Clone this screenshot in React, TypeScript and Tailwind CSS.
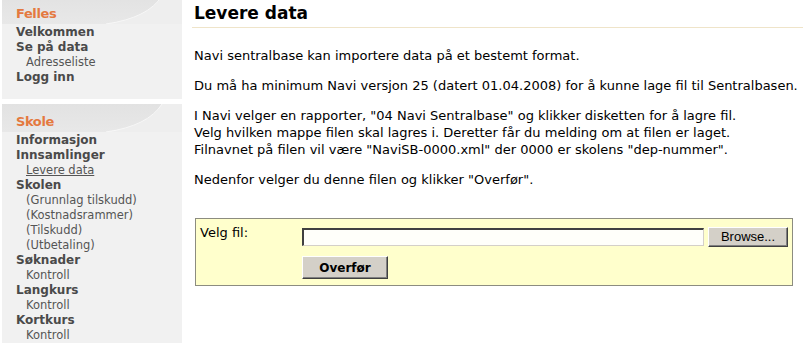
import React from "react";

type MenuItem = { label: string; sub?: boolean; active?: boolean };

const felles: MenuItem[] = [
  { label: "Velkommen" },
  { label: "Se på data" },
  { label: "Adresseliste", sub: true },
  { label: "Logg inn" },
];

const skole: MenuItem[] = [
  { label: "Informasjon" },
  { label: "Innsamlinger" },
  { label: "Levere data", sub: true, active: true },
  { label: "Skolen" },
  { label: "(Grunnlag tilskudd)", sub: true },
  { label: "(Kostnadsrammer)", sub: true },
  { label: "(Tilskudd)", sub: true },
  { label: "(Utbetaling)", sub: true },
  { label: "Søknader" },
  { label: "Kontroll", sub: true },
  { label: "Langkurs" },
  { label: "Kontroll", sub: true },
  { label: "Kortkurs" },
  { label: "Kontroll", sub: true },
];

const Swoosh = () => (
  <svg className="absolute inset-0" width="180" height="28" viewBox="0 0 180 28">
    <path d="M104 28 Q146 22 160 0 L180 0 L180 28 Z" fill="#eeeeee" />
    <path d="M104 28 Q146 22 160 0" fill="none" stroke="#f7f7f7" strokeWidth="1" />
  </svg>
);

const Panel = ({ title, items, last }: { title: string; items: MenuItem[]; last?: boolean }) => (
  <div className={`w-[180px] bg-[#f1f1f1] ${last ? "" : "pb-[14px]"}`}>
    <div className="relative h-[28px] bg-[linear-gradient(#e2e2e2,#e8e8e8)]">
      <Swoosh />
      <div className="relative pl-[14px] pt-[10px] text-[13px] leading-[16px] font-bold tracking-[-0.4px] text-[#e4793f]">
        {title}
      </div>
    </div>
    <ul className="pt-[1px] text-[#4a4a4a]">
      {items.map((it, i) => (
        <li
          key={i}
          className={
            it.sub
              ? `pl-[24px] text-[11.5px] leading-[15px] text-[#555] ${it.active ? "underline" : ""}`
              : "pl-[14px] text-[12px] leading-[15px] font-bold"
          }
        >
          {it.label}
        </li>
      ))}
    </ul>
  </div>
);

export default function App() {
  return (
    <div className="flex w-[803px] h-[343px] overflow-hidden bg-white font-['DejaVu_Sans',Verdana,sans-serif]">
      <aside className="w-[182px] shrink-0 -mt-[4px] pl-[2px] flex flex-col gap-[5px]">
        <Panel title="Felles" items={felles} />
        <Panel title="Skole" items={skole} last />
      </aside>

      <main className="flex-1 ml-[10px] text-[13px] text-black">
        <h1 className="pl-[2px] pt-[3px] pb-[4px] text-[17px] leading-[20px] font-bold border-b border-[#efe4c9]">
          Levere data
        </h1>
        <div className="pl-[2px] pt-[19px] leading-[17px]">
          <p className="mb-[13px]">Navi sentralbase kan importere data på et bestemt format.</p>
          <p className="mb-[13px]">
            Du må ha minimum Navi versjon 25 (datert 01.04.2008) for å kunne lage fil til Sentralbasen.
          </p>
          <p className="mb-[13px]">
            I Navi velger en rapporter, "04 Navi Sentralbase" og klikker disketten for å lagre fil.
            <br />
            Velg hvilken mappe filen skal lagres i. Deretter får du melding om at filen er laget.
            <br />
            Filnavnet på filen vil være "NaviSB-0000.xml" der 0000 er skolens "dep-nummer".
          </p>
          <p>Nedenfor velger du denne filen og klikker "Overfør".</p>
        </div>

        <div className="mt-[30px] ml-[3px] mr-[10px] flex bg-[#ffffcc] border border-[#8c8c80] pl-[4px] pb-[6px]">
          <div className="w-[102px] shrink-0 pt-[6px] leading-[16px]">Velg fil:</div>
          <div className="flex flex-col pt-[8px]">
            <div className="flex items-center gap-[4px]">
              <div className="w-[402px] h-[18px] bg-[#fffffa] border-t-2 border-l-2 border-t-[#404040] border-l-[#404040] border-b border-r border-b-[#d4d0c8] border-r-[#d4d0c8]" />
              <button
                type="button"
                className="w-[80px] h-[20px] bg-[#d4d0c8] border border-t-white border-l-white border-b-[#404040] border-r-[#404040] shadow-[inset_-1px_-1px_0_#808080] font-['Liberation_Sans',Arial,sans-serif] text-[13px] leading-[16px] text-black"
              >
                Browse...
              </button>
            </div>
            <button
              type="button"
              className="mt-[9px] w-[86px] h-[23px] bg-[#d4d0c8] border border-t-white border-l-white border-b-[#404040] border-r-[#404040] shadow-[inset_-1px_-1px_0_#808080] text-[12px] font-bold leading-[16px] text-black"
            >
              Overfør
            </button>
          </div>
        </div>
      </main>
    </div>
  );
}
